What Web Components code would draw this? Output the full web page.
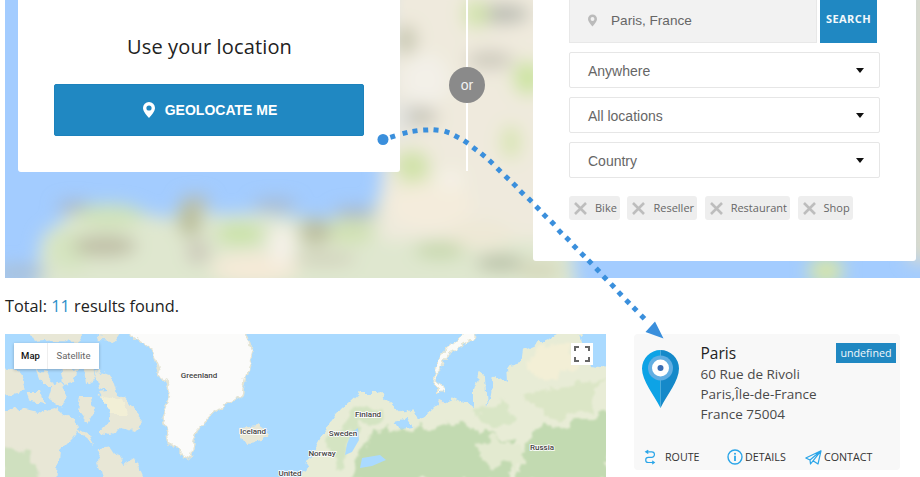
<!DOCTYPE html>
<html>
<head>
<meta charset="utf-8">
<style>
  html, body { margin: 0; height: 477px; overflow: hidden; background: #fff; }
  body { font-family: "Open Sans", sans-serif; position: relative; }
</style>
</head>
<body>
<locator-page></locator-page>
<script>
// shared pin shape, used by the button and the search box
const pinIcon = (color, w, h) => `<svg width="${w}" height="${h}" viewBox="0 0 12 16"><path fill="${color}" fill-rule="evenodd" d="M6 0a6 6 0 0 1 6 6c0 3.6-4 7.6-6 10C4 13.6 0 9.6 0 6a6 6 0 0 1 6-6zm0 3.4a2.6 2.6 0 1 0 0 5.2 2.6 2.6 0 0 0 0-5.2z"/></svg>`;

class BlurredBackdrop extends HTMLElement {
  constructor() {
    super();
    this.attachShadow({ mode: "open" });
    const blobs = [
      [75,207,18,6,"#aab5c2"],[275,205,22,6,"#a8b8ca"],[355,213,22,6,"#a9b5c3"],[195,202,15,7,"#b5bcb8"],
      [110,216,34,12,"#d0e3ba"],[240,234,24,10,"#c8e2a4"],[350,232,24,12,"#d0e1b2"],[440,250,26,9,"#c6d8ac"],
      [420,188,20,12,"#d5e6ae"],[70,250,22,20,"#d4e4bf"],
      [105,246,32,11,"#bfbfa6"],[190,220,13,17,"#bbbf9c"],[198,252,12,12,"#ccc9ba"],[315,232,16,14,"#bdc0a0"],[325,259,32,5,"#ccc9b4"],
      [255,268,44,14,"#f6ead8"],[282,245,13,20,"#f5f1e8"],[430,205,42,24,"#f4ecdc"],[450,180,15,10,"#f5f1e6"],
      [20,273,28,8,"#aac0d4"],[500,263,24,7,"#b2b9a0"],[540,270,22,8,"#d4d5b8"],[480,235,32,14,"#eee8d6"],
      [826,271,18,15,"#d6e5ac"],
      [406,40,11,15,"#c8c8b2"],[425,80,24,26,"#f3f0e8"],[500,14,30,10,"#babcb2"],[476,14,13,15,"#d2e4ac"],[490,60,24,9,"#ccc9bc"],
      [528,78,15,17,"#cce4a0"],[511,142,10,17,"#d8e5b2"],[412,165,18,15,"#d0e2a8"],[418,116,20,10,"#c8c6ba"],[403,120,6,22,"#dfe2e2"]
    ].map(b => `<ellipse cx="${b[0]}" cy="${b[1]}" rx="${b[2]}" ry="${b[3]}" fill="${b[4]}"/>`).join("");
    this.shadowRoot.innerHTML = `
      <style>:host { position: absolute; inset: 0; display: block; overflow: hidden; } svg { display: block; }</style>
      <svg width="915" height="278" viewBox="5 0 915 278">
        <defs><filter id="b" x="-10%" y="-10%" width="120%" height="120%"><feGaussianBlur stdDeviation="8.5"/></filter></defs>
        <rect x="5" width="915" height="278" fill="#a3ccff"/>
        <g filter="url(#b)">
          <path fill="#dfe7cf" d="M34 295 L42 236 L85 204 L130 210 L170 219 L190 199 L212 215 L262 213 L290 217 L330 220 L375 208 L385 175 L392 100 L392 -20 L600 -20 L572 255 L578 295Z"/>
          <path fill="#efeadd" d="M388 -20 H600 L575 240 L380 240Z"/>
          <path fill="#dedcc8" d="M908 -20 H935 V262 H908Z"/>
          ${blobs}
        </g>
      </svg>`;
  }
}
customElements.define("blurred-backdrop", BlurredBackdrop);

class GeoCard extends HTMLElement {
  constructor() {
    super();
    this.attachShadow({ mode: "open" });
    this.shadowRoot.innerHTML = `
      <style>
        :host { display: flex; flex-direction: column; align-items: center; box-sizing: border-box; width: 382px; height: 172px; padding-top: 33px; background: #fff; border-radius: 0 0 3px 3px; }
        h2 { margin: 0 0 0 1px; font: 400 20px/28px "Open Sans", sans-serif; letter-spacing: .15px; color: #222; }
        button { display: flex; align-items: center; justify-content: center; gap: 10px; box-sizing: border-box; width: 310px; height: 52px; margin: 23px 0 0 0; padding: 0 0 1px 2px; background: #2088c2; border: 1px solid #1c82bc; border-radius: 2px; color: #fff; font: 700 14px "Liberation Sans", sans-serif; }
      </style>
      <h2><slot name="title"></slot></h2>
      <button>${pinIcon("#fff", 12, 16)}<slot name="action"></slot></button>`;
  }
}
customElements.define("geo-card", GeoCard);

class OrDivider extends HTMLElement {
  constructor() {
    super();
    this.attachShadow({ mode: "open" });
    this.shadowRoot.innerHTML = `
      <style>
        :host { display: flex; justify-content: center; width: 133px; height: 171px; position: relative; }
        .line { width: 2px; height: 100%; background: #fff; }
        .dot { position: absolute; left: 49px; top: 67px; width: 36px; height: 36px; border-radius: 50%; background: #8a8a8a; color: #f2f2f2; font: 14px/36px "Liberation Sans", sans-serif; text-align: center; }
      </style>
      <div class="line"></div>
      <div class="dot"><slot></slot></div>`;
  }
}
customElements.define("or-divider", OrDivider);

class DropSelect extends HTMLElement {
  constructor() {
    super();
    this.attachShadow({ mode: "open" });
    this.shadowRoot.innerHTML = `
      <style>
        :host { display: flex; align-items: center; justify-content: space-between; box-sizing: border-box; width: 311px; height: 36px; padding: 1px 15px 0 18px; background: #fff; border: 1px solid #e6e6e6; border-radius: 2px; color: #666; font: 14px "Liberation Sans", sans-serif; }
        i { width: 0; height: 0; margin-top: -1px; border: 4px solid transparent; border-top: 5px solid #111; border-bottom: 0; }
      </style>
      <slot></slot><i></i>`;
  }
}
customElements.define("drop-select", DropSelect);

class FilterChip extends HTMLElement {
  constructor() {
    super();
    this.attachShadow({ mode: "open" });
    this.shadowRoot.innerHTML = `
      <style>
        :host { display: inline-flex; align-items: center; gap: 8px; box-sizing: border-box; height: 24px; padding: 0 3px 1px 5px; background: #eee; border-radius: 3px; color: #666; font: 11px "Open Sans", sans-serif; }
        svg { display: block; margin-top: 1px; }
      </style>
      <svg width="13" height="13" viewBox="0 0 13 13"><path d="M1 1 L12 12 M12 1 L1 12" stroke="#bdbdbd" stroke-width="2.6"/></svg>
      <slot></slot>`;
  }
}
customElements.define("filter-chip", FilterChip);

class SearchPanel extends HTMLElement {
  constructor() {
    super();
    this.attachShadow({ mode: "open" });
    this.shadowRoot.innerHTML = `
      <style>
        :host { display: flex; flex-direction: column; box-sizing: border-box; width: 383px; height: 261px; padding: 0 36px; background: #fff; border-radius: 0 0 3px 3px; }
        .search { display: flex; gap: 3px; height: 43px; margin-bottom: 9px; }
        .field { display: flex; align-items: center; gap: 14px; box-sizing: border-box; width: 248px; padding: 0 0 2px 18px; background: #f2f2f2; border: 1px solid #e8e8e8; border-top: 0; color: #666; font: 13.6px "Liberation Sans", sans-serif; }
        .go { display: flex; align-items: center; justify-content: center; width: 57px; padding-bottom: 6px; box-sizing: border-box; background: #2088c2; color: #f4f8fb; font: 700 11px "Open Sans", sans-serif; letter-spacing: .45px; }
        .selects { display: flex; flex-direction: column; gap: 9px; }
        .chips { display: flex; gap: 7.6px; margin-top: 18px; }
      </style>
      <div class="search">
        <div class="field">${pinIcon("#bbb", 9, 13)}<slot name="place"></slot></div>
        <div class="go"><slot name="go"></slot></div>
      </div>
      <div class="selects"><slot name="select"></slot></div>
      <div class="chips"><slot name="chip"></slot></div>`;
  }
}
customElements.define("search-panel", SearchPanel);

class WorldMap extends HTMLElement {
  constructor() {
    super();
    this.attachShadow({ mode: "open" });
    this.shadowRoot.innerHTML = `
      <style>
        :host { display: block; position: relative; width: 601px; height: 143px; overflow: hidden; background: #aadaff; }
        svg.m { display: block; }
        text { font: 500 8px Roboto, sans-serif; fill: #444; stroke: #fff; stroke-width: 1.6px; paint-order: stroke; text-anchor: middle; }
        .type { position: absolute; left: 9px; top: 9px; display: flex; height: 26px; background: #fff; box-shadow: 0 1px 3px rgba(0,0,0,.25); font: 9.5px/26px Roboto, sans-serif; }
        .type b { font-weight: 500; color: #111; width: 33px; text-align: center; border-right: 1px solid #eee; }
        .type span { color: #666; width: 51px; text-align: center; }
        .full { position: absolute; left: 566px; top: 9px; width: 22px; height: 22px; background: #fff; display: flex; align-items: center; justify-content: center; }
      </style>
      <svg class="m" width="601" height="143" viewBox="5 334 601 143">
        <defs>
          <filter id="s" x="-5%" y="-5%" width="110%" height="110%">
            <feTurbulence type="fractalNoise" baseFrequency=".11" numOctaves="3" seed="4" result="n"/>
            <feDisplacementMap in="SourceGraphic" in2="n" scale="9" xChannelSelector="R" yChannelSelector="G"/>
            <feGaussianBlur stdDeviation=".45"/>
          </filter>
          <filter id="t" x="-5%" y="-5%" width="110%" height="110%">
            <feTurbulence type="fractalNoise" baseFrequency=".06" numOctaves="4" seed="9" result="n"/>
            <feDisplacementMap in="SourceGraphic" in2="n" scale="22" xChannelSelector="R" yChannelSelector="G"/>
            <feGaussianBlur stdDeviation="1"/>
          </filter>
        </defs>
        <g filter="url(#s)">
          <g fill="#e8e7d6">
            <path d="M0 412 L25 408 L40 412 L55 408 L62 414 L75 420 L80 427 L72 438 L60 450 L57 482 L0 482Z"/>
            <path d="M100 448 L112 446 L124 464 L134 458 L145 482 L103 482 L98 462Z"/>
            <path d="M98 392 L112 390 L125 398 L135 410 L144 420 L134 431 L120 428 L110 434 L100 432 L108 422 L114 412 L104 402Z"/>
            <path d="M52 385 L60 382 L68 393 L62 408 L48 398Z"/>
            <path d="M36 370 L48 372 L54 386 L42 386Z"/>
            <path d="M80 396 L92 396 L94 412 L87 424 L78 412Z"/>
            <path d="M78 428 L90 435 L95 444 L85 440Z"/>
            <path d="M28 330 L85 330 L78 342 L55 341 L35 343Z"/>
            <path d="M94 370 L110 376 L116 394 L100 388Z"/>
            <path d="M0 368 L18 370 L26 390 L14 394 L0 396Z"/>
            <path d="M60 371 L78 369 L74 382 L62 384Z"/>
            <path d="M84 369 L93 367 L96 380 L86 384Z"/>
            <path d="M98 330 L122 330 L114 342 L100 341Z"/>
            <path d="M26 392 L40 392 L44 404 L30 402Z"/>
          </g>
          <path fill="#f2efd6" d="M100 396 L122 400 L128 414 L112 414Z"/>
          <path fill="#fbfbfa" stroke="#e4e4d4" stroke-width="1.5" d="M123 330 L150 348 L160 373 L170 390 L168 403 L163 417 L170 443 L182 455 L190 458 L197 430 L213 413 L242 395 L245 380 L253 352 L245 330Z"/>
          <path fill="#e8e7d6" d="M240 428 L258 426 L267 432 L262 441 L248 443 L240 438Z"/>
          <path fill="#e8ecd6" d="M300 482 L308 460 L320 437 L340 410 L360 392 L377 392 L397 410 L407 418 L396 425 L413 407 L418 420 L437 405 L453 398 L473 407 L473 392 L480 372 L486 376 L488 410 L494 375 L508 383 L507 367 L520 363 L522 350 L553 337 L567 330 L580 330 L590 366 L612 368 L612 482Z"/>
          <path fill="#aadaff" d="M394 421 L408 418 L414 428 L400 430Z"/>
          <path fill="#fbfbf8" stroke="#e8e6d0" stroke-width="1" d="M473 330 L476 336 L462 345 L448 354 L440 370 L435 381 L447 392 L440 392 L433 385 L437 367 L445 350 L457 340 L466 330Z"/>
          <path fill="#e8e7d6" d="M436 402 L440 401 L442 404 L438 406Z"/>
        </g>
        <g filter="url(#t)">
          <path fill="#cfe0bf" d="M0 452 L28 450 L42 482 L0 482Z"/>
          <path fill="#f3efd6" d="M530 355 L556 342 L568 340 L580 362 L560 372 L540 382 L526 376Z"/>
          <path fill="#d4e4c2" d="M325 445 L345 420 L370 402 L388 412 L376 424 L350 432 L340 470Z"/>
          <path fill="#c2dab1" d="M352 482 L372 432 L395 430 L420 428 L460 424 L490 434 L512 438 L512 482Z"/>
          <path fill="#c2dab1" d="M515 482 L530 432 L570 425 L612 410 L612 482Z"/>
          <path fill="#e3ead0" d="M474 445 L500 436 L526 450 L518 466 L484 464Z"/>
          <path fill="#dbe6c6" d="M525 395 L565 385 L602 380 L590 410 L550 420Z"/>
          <path fill="#d9e6c6" d="M470 410 L500 400 L518 420 L495 430Z"/>
        </g>
        <path fill="#aadaff" d="M352 432 L358 428 L359 440 L352 452 L345 455 L347 444Z"/>
        <path fill="#aadaff" d="M362 458 L380 455 L386 460 L372 466 L360 468Z"/>
        <text x="199" y="378">Greenland</text>
        <text x="253" y="434">Iceland</text>
        <text x="322" y="456">Norway</text>
        <text x="343" y="436">Sweden</text>
        <text x="368" y="417">Finland</text>
        <text x="542" y="450">Russia</text>
        <text x="290" y="476">United</text>
      </svg>
      <div class="type"><b>Map</b><span>Satellite</span></div>
      <div class="full"><svg width="16" height="16" viewBox="0 0 16 16"><path fill="none" stroke="#666" stroke-width="2" d="M1 5V1H5 M11 1H15V5 M15 11V15H11 M5 15H1V11"/></svg></div>`;
  }
}
customElements.define("world-map", WorldMap);

class StoreCard extends HTMLElement {
  constructor() {
    super();
    this.attachShadow({ mode: "open" });
    this.shadowRoot.innerHTML = `
      <style>
        :host { display: block; box-sizing: border-box; width: 266px; height: 136px; padding: 7px 4px 0 8px; background: #f8f8f8; border-radius: 4px; color: #444; }
        .top { display: flex; height: 104px; }
        .pin { width: 58.5px; flex: none; padding-top: 9px; }
        .pin svg { display: block; }
        .info { flex: 1; }
        .head { display: flex; justify-content: space-between; height: 23px; }
        .name { font: 500 15.5px/24px "Open Sans", sans-serif; color: #222; }
        .badge { align-self: flex-start; margin-top: 2px; padding: 0 4.5px; height: 20px; background: #2088c2; color: #f2f8fc; font: 10.7px/20px "Open Sans", sans-serif; }
        .addr { font: 13.5px/20px "Open Sans", sans-serif; color: #4a4a4a; }
        .acts { display: flex; height: 24px; align-items: center; margin-left: 2px; font: 10.7px "Open Sans", sans-serif; color: #333; }
        .acts span { display: flex; align-items: center; }
        .acts svg { display: block; flex: none; }
      </style>
      <div class="top">
        <div class="pin">
          <svg width="37" height="58" viewBox="0 0 37 58">
            <path fill="#0da3e6" d="M18.5 0A18.5 18.5 0 0 0 0 18.500C0 31 12 45 18.500 58Z"/>
            <path fill="#1589c9" d="M18.500 0A18.500 18.500 0 0 1 37 18.500C37 31 25 45 18.500 58Z"/>
            <circle cx="18.500" cy="18" r="12.500" fill="#62aee2"/>
            <circle cx="18.500" cy="18" r="8.500" fill="#fff"/>
            <circle cx="18.500" cy="18" r="3" fill="#3a6db4"/>
          </svg>
        </div>
        <div class="info">
          <div class="head"><div class="name"><slot name="name"></slot></div><div class="badge"><slot name="badge"></slot></div></div>
          <div class="addr"><slot name="address"></slot></div>
        </div>
      </div>
      <div class="acts">
        <span style="width:83px;gap:9px">
          <svg width="12" height="18" viewBox="0 0 14 18"><path fill="none" stroke="#2aa5e8" stroke-width="1.4" d="M5 1 L2 3 L5 5 M2 3H9a3.200 3.200 0 0 1 0 6.400H5a3 3 0 0 0 0 6H12 M9.500 13.500 L12 15.400 L9.500 17.300"/></svg>
          <slot name="route"></slot></span>
        <span style="width:78px;gap:2px">
          <svg width="16" height="16" viewBox="0 0 16 16"><circle cx="8" cy="8" r="7" fill="none" stroke="#2aa5e8" stroke-width="1.400"/><circle cx="8" cy="4.700" r="1" fill="#2aa5e8"/><path d="M8 6.800V12" stroke="#2aa5e8" stroke-width="1.800"/></svg>
          <slot name="details"></slot></span>
        <span style="gap:2px">
          <svg width="17" height="15" viewBox="0 0 17 15"><path fill="none" stroke="#2aa5e8" stroke-width="1.200" stroke-linejoin="round" d="M.8 8 L16 .8 L13 14 L8 10.800 L5.500 14 L5 10 Z M5 10 L16 .8 M8 10.800 L16 .8"/></svg>
          <slot name="contact"></slot></span>
      </div>`;
  }
}
customElements.define("store-card", StoreCard);

class DottedArrow extends HTMLElement {
  constructor() {
    super();
    this.attachShadow({ mode: "open" });
    const pts = [[392.700,136.700],[405,133],[415,131],[425.700,130],[436,130],[447,132],[456.700,136.700],[466,142],[474.700,148.700],[483,155],[491,162],[499,170],[507,177.700],[514.700,185],[522,192.700],[530,200],[537.700,208],[545,215.700],[552.700,223],[560,231.700],[567.700,239],[575,247],[582.700,254.700],[590,262],[597.700,270],[605,278],[612.700,285.700],[620,293.700],[627.700,301.700],[635,309],[642.700,317]];
    const dots = pts.map((p, i) => {
      const q = pts[i + 1] || p, o = pts[i - 1] || p;
      const a = Math.atan2(q[1] - o[1], q[0] - o[0]) * 180 / Math.PI;
      return `<rect x="-2.500" y="-2.500" width="5" height="5" transform="translate(${p[0]} ${p[1]}) rotate(${a})"/>`;
    }).join("");
    this.shadowRoot.innerHTML = `
      <style>:host { position: absolute; inset: 0; display: block; pointer-events: none; }</style>
      <svg width="920" height="477" fill="#3a8fdc">
        <circle cx="383" cy="139.500" r="5.500"/>
        ${dots}
        <path d="M645.500 332 L655 321.500 L663.500 338.500Z"/>
      </svg>`;
  }
}
customElements.define("dotted-arrow", DottedArrow);

class LocatorPage extends HTMLElement {
  constructor() {
    super();
    this.attachShadow({ mode: "open" });
    this.shadowRoot.innerHTML = `
      <style>
        :host { display: block; }
        .hero { position: relative; display: flex; align-items: flex-start; height: 278px; margin-left: 5px; padding-left: 13px; }
        .hero > :not(blurred-backdrop) { position: relative; }
        .total { height: 56px; padding-left: 5px; font: 16.3px/56px "Open Sans", sans-serif; color: #222; }
        .total em { font-style: normal; color: #2e8fc9; }
        .lower { display: flex; padding-left: 5px; gap: 28px; }
      </style>
      <section class="hero">
        <blurred-backdrop></blurred-backdrop>
        <geo-card><span slot="title">Use your location</span><span slot="action">GEOLOCATE ME</span></geo-card>
        <or-divider>or</or-divider>
        <search-panel>
          <span slot="place">Paris, France</span>
          <span slot="go">SEARCH</span>
          <drop-select slot="select">Anywhere</drop-select>
          <drop-select slot="select">All locations</drop-select>
          <drop-select slot="select">Country</drop-select>
          <filter-chip slot="chip">Bike</filter-chip>
          <filter-chip slot="chip">Reseller</filter-chip>
          <filter-chip slot="chip">Restaurant</filter-chip>
          <filter-chip slot="chip">Shop</filter-chip>
        </search-panel>
      </section>
      <div class="total">Total: <em>11</em> results found.</div>
      <div class="lower">
        <world-map></world-map>
        <store-card>
          <span slot="name">Paris</span>
          <span slot="badge">undefined</span>
          <span slot="address">60 Rue de Rivoli<br>Paris,Île-de-France<br>France 75004</span>
          <span slot="route">ROUTE</span>
          <span slot="details">DETAILS</span>
          <span slot="contact">CONTACT</span>
        </store-card>
      </div>
      <dotted-arrow></dotted-arrow>`;
  }
}
customElements.define("locator-page", LocatorPage);
</script>
</body>
</html>
